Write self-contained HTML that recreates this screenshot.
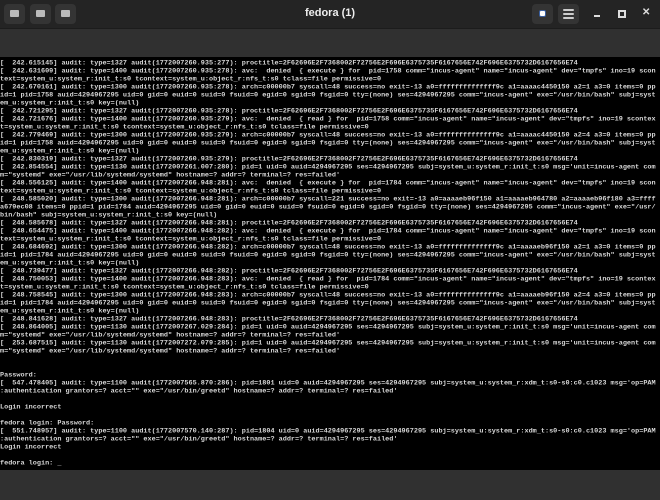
<!DOCTYPE html>
<html><head><meta charset="utf-8"><style>
html,body{margin:0;padding:0;width:660px;height:500px;overflow:hidden;background:#303030;font-family:"Liberation Sans",sans-serif}
#tb{position:absolute;left:0;top:0;width:660px;height:28px;background:#242424;border-bottom:1px solid #1c1c1c}
.b{position:absolute;top:4px;width:21px;height:20px;background:#343434;border-radius:4px}
.b i{position:absolute;left:6px;top:6px;width:9px;height:7px;background:#bbb;border-radius:1px}
#title{position:absolute;left:0;right:0;top:7px;text-align:center;color:#eee;font-weight:bold;font-size:11px}
#term{position:absolute;left:0;top:57px;width:660px;height:413px;background:#000;overflow:hidden}
pre{position:absolute;left:0;top:3px;margin:0;padding:0;font-family:"Liberation Mono",monospace;font-size:6.84px;line-height:9px;color:#d8d8d8;white-space:pre;font-weight:bold;transform:scaleY(0.889);transform-origin:0 0}
.w{position:absolute;top:8px;color:#ddd;font-size:10px;font-weight:bold}
</style></head><body>
<div id="tb">
<div class="b" style="left:4px"><i></i></div>
<div class="b" style="left:30px"><i></i></div>
<div class="b" style="left:55px"><i></i></div>
<div id="title">fedora (1)</div>
<div class="b" style="left:532px"><i style="left:8px;top:7px;width:5px;height:5px;background:#fff;box-shadow:0 0 0 1px #3a5fa0"></i></div>
<div class="b" style="left:558px"><i style="left:5px;top:5px;width:11px;height:2px;background:#ccc;box-shadow:0 4px 0 #ccc,0 8px 0 #ccc"></i></div>
<div style="position:absolute;left:594px;top:15px;width:6px;height:2px;background:#ddd"></div>
<div style="position:absolute;left:618px;top:10px;width:4px;height:4px;border:2px solid #ddd"></div>
<div class="w" style="left:642px;top:7px">✕</div>
</div>
<div id="term"><pre>[  242.615145] audit: type=1327 audit(1772007260.935:277): proctitle=2F62696E2F7368002F72756E2F696E6375735F6167656E742F696E6375732D6167656E74
[  242.631609] audit: type=1400 audit(1772007260.935:278): avc:  denied  { execute } for  pid=1758 comm="incus-agent" name="incus-agent" dev="tmpfs" ino=19 scon
text=system_u:system_r:init_t:s0 tcontext=system_u:object_r:nfs_t:s0 tclass=file permissive=0
[  242.670161] audit: type=1300 audit(1772007260.935:278): arch=c00000b7 syscall=48 success=no exit=-13 a0=ffffffffffffff9c a1=aaaac4450150 a2=1 a3=0 items=0 pp
id=1 pid=1758 auid=4294967295 uid=0 gid=0 euid=0 suid=0 fsuid=0 egid=0 sgid=0 fsgid=0 tty=(none) ses=4294967295 comm="incus-agent" exe="/usr/bin/bash" subj=syst
em_u:system_r:init_t:s0 key=(null)
[  242.721295] audit: type=1327 audit(1772007260.935:278): proctitle=2F62696E2F7368002F72756E2F696E6375735F6167656E742F696E6375732D6167656E74
[  242.721676] audit: type=1400 audit(1772007260.935:279): avc:  denied  { read } for  pid=1758 comm="incus-agent" name="incus-agent" dev="tmpfs" ino=19 scontex
t=system_u:system_r:init_t:s0 tcontext=system_u:object_r:nfs_t:s0 tclass=file permissive=0
[  242.779469] audit: type=1300 audit(1772007260.935:279): arch=c00000b7 syscall=48 success=no exit=-13 a0=ffffffffffffff9c a1=aaaac4450150 a2=4 a3=0 items=0 pp
id=1 pid=1758 auid=4294967295 uid=0 gid=0 euid=0 suid=0 fsuid=0 egid=0 sgid=0 fsgid=0 tty=(none) ses=4294967295 comm="incus-agent" exe="/usr/bin/bash" subj=syst
em_u:system_r:init_t:s0 key=(null)
[  242.830319] audit: type=1327 audit(1772007260.935:279): proctitle=2F62696E2F7368002F72756E2F696E6375735F6167656E742F696E6375732D6167656E74
[  242.854554] audit: type=1130 audit(1772007261.007:280): pid=1 uid=0 auid=4294967295 ses=4294967295 subj=system_u:system_r:init_t:s0 msg='unit=incus-agent com
m="systemd" exe="/usr/lib/systemd/systemd" hostname=? addr=? terminal=? res=failed'
[  248.556125] audit: type=1400 audit(1772007266.948:281): avc:  denied  { execute } for  pid=1784 comm="incus-agent" name="incus-agent" dev="tmpfs" ino=19 scon
text=system_u:system_r:init_t:s0 tcontext=system_u:object_r:nfs_t:s0 tclass=file permissive=0
[  248.585020] audit: type=1300 audit(1772007266.948:281): arch=c00000b7 syscall=221 success=no exit=-13 a0=aaaaeb96f150 a1=aaaaeb964780 a2=aaaaeb96f180 a3=ffff
a679ec08 items=0 ppid=1 pid=1784 auid=4294967295 uid=0 gid=0 euid=0 suid=0 fsuid=0 egid=0 sgid=0 fsgid=0 tty=(none) ses=4294967295 comm="incus-agent" exe="/usr/
bin/bash" subj=system_u:system_r:init_t:s0 key=(null)
[  248.585678] audit: type=1327 audit(1772007266.948:281): proctitle=2F62696E2F7368002F72756E2F696E6375735F6167656E742F696E6375732D6167656E74
[  248.654475] audit: type=1400 audit(1772007266.948:282): avc:  denied  { execute } for  pid=1784 comm="incus-agent" name="incus-agent" dev="tmpfs" ino=19 scon
text=system_u:system_r:init_t:s0 tcontext=system_u:object_r:nfs_t:s0 tclass=file permissive=0
[  248.684692] audit: type=1300 audit(1772007266.948:282): arch=c00000b7 syscall=48 success=no exit=-13 a0=ffffffffffffff9c a1=aaaaeb96f150 a2=1 a3=0 items=0 pp
id=1 pid=1784 auid=4294967295 uid=0 gid=0 euid=0 suid=0 fsuid=0 egid=0 sgid=0 fsgid=0 tty=(none) ses=4294967295 comm="incus-agent" exe="/usr/bin/bash" subj=syst
em_u:system_r:init_t:s0 key=(null)
[  248.739477] audit: type=1327 audit(1772007266.948:282): proctitle=2F62696E2F7368002F72756E2F696E6375735F6167656E742F696E6375732D6167656E74
[  248.750053] audit: type=1400 audit(1772007266.948:283): avc:  denied  { read } for  pid=1784 comm="incus-agent" name="incus-agent" dev="tmpfs" ino=19 scontex
t=system_u:system_r:init_t:s0 tcontext=system_u:object_r:nfs_t:s0 tclass=file permissive=0
[  248.758545] audit: type=1300 audit(1772007266.948:283): arch=c00000b7 syscall=48 success=no exit=-13 a0=ffffffffffffff9c a1=aaaaeb96f150 a2=4 a3=0 items=0 pp
id=1 pid=1784 auid=4294967295 uid=0 gid=0 euid=0 suid=0 fsuid=0 egid=0 sgid=0 fsgid=0 tty=(none) ses=4294967295 comm="incus-agent" exe="/usr/bin/bash" subj=syst
em_u:system_r:init_t:s0 key=(null)
[  248.841628] audit: type=1327 audit(1772007266.948:283): proctitle=2F62696E2F7368002F72756E2F696E6375735F6167656E742F696E6375732D6167656E74
[  248.864005] audit: type=1130 audit(1772007267.029:284): pid=1 uid=0 auid=4294967295 ses=4294967295 subj=system_u:system_r:init_t:s0 msg='unit=incus-agent com
m="systemd" exe="/usr/lib/systemd/systemd" hostname=? addr=? terminal=? res=failed'
[  253.687515] audit: type=1130 audit(1772007272.079:285): pid=1 uid=0 auid=4294967295 ses=4294967295 subj=system_u:system_r:init_t:s0 msg='unit=incus-agent com
m="systemd" exe="/usr/lib/systemd/systemd" hostname=? addr=? terminal=? res=failed'


Password:
[  547.478405] audit: type=1100 audit(1772007565.870:286): pid=1801 uid=0 auid=4294967295 ses=4294967295 subj=system_u:system_r:xdm_t:s0-s0:c0.c1023 msg='op=PAM
:authentication grantors=? acct="" exe="/usr/bin/greetd" hostname=? addr=? terminal=? res=failed'

Login incorrect

fedora login: Password:
[  551.748957] audit: type=1100 audit(1772007570.140:287): pid=1804 uid=0 auid=4294967295 ses=4294967295 subj=system_u:system_r:xdm_t:s0-s0:c0.c1023 msg='op=PAM
:authentication grantors=? acct="" exe="/usr/bin/greetd" hostname=? addr=? terminal=? res=failed'
Login incorrect

fedora login: _</pre></div>
</body></html>
